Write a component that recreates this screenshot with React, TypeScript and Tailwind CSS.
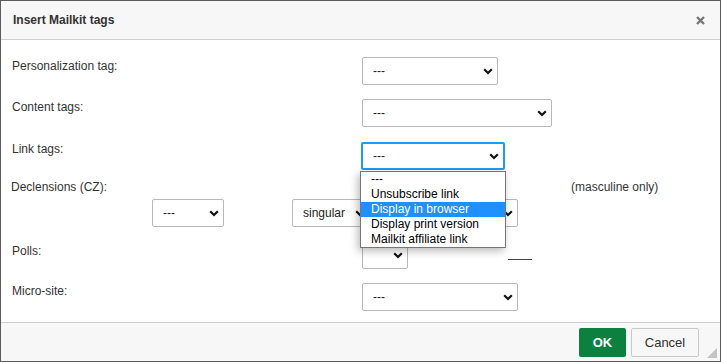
import React from 'react'

function Chevron() {
  return (
    <svg width="10" height="7" viewBox="0 0 10 7" className="shrink-0">
      <path d="M1.2 1.2 L5 5 L8.8 1.2" fill="none" stroke="#111" strokeWidth="2.2" />
    </svg>
  )
}

function Select({ w, value = '', focused = false }: { w: string; value?: string; focused?: boolean }) {
  return (
    <div
      className={`${w} h-[28px] flex items-center justify-between pl-[10px] pr-[4px] bg-white rounded-[2px] ${
        focused ? 'border-2 border-[#1e9bf0] -ml-px' : 'border border-[#b8b8b8]'
      }`}
    >
      <span className="text-[12px] text-[#222] leading-none">{value}</span>
      <Chevron />
    </div>
  )
}

const options = ['---', 'Unsubscribe link', 'Display in browser', 'Display print version', 'Mailkit affiliate link']

export default function App() {
  return (
    <div
      className="relative w-[721px] h-[362px] border border-[#5b5b5b] bg-white flex flex-col text-[#333]"
      style={{ fontFamily: '"Liberation Sans", Arial, sans-serif' }}
    >
      {/* header */}
      <div className="h-[39px] shrink-0 bg-[#f7f7f7] border-b border-[#cfcfcf] flex items-center justify-between pl-3 pr-[15px]">
        <span className="text-[12px] font-bold text-[#333]">Insert Mailkit tags</span>
        <svg width="9" height="9" viewBox="0 0 9 9">
          <path d="M1 1 L8 8 M8 1 L1 8" stroke="#777" strokeWidth="2.4" />
        </svg>
      </div>

      {/* body */}
      <div className="flex-1 pt-[17px] text-[12px] leading-[15px]">
        <div className="flex items-start">
          <div className="w-[361px] pl-[11px] mt-[2px]">Personalization tag:</div>
          <Select w="w-[136px]" value="---" />
        </div>
        <div className="flex items-start mt-[14px]">
          <div className="w-[361px] pl-[11px] mt-px">Content tags:</div>
          <Select w="w-[190px]" value="---" />
        </div>
        <div className="flex items-start mt-[15px]">
          <div className="w-[361px] pl-[11px]">Link tags:</div>
          <Select w="w-[144px]" value="---" focused />
        </div>

        <div className="flex mt-[10px]">
          <div className="w-[570px] pl-[10px]">Declensions (CZ):</div>
          <div>(masculine only)</div>
        </div>
        <div className="flex mt-[4px]">
          <div className="w-[151px]" />
          <Select w="w-[72px]" value="---" />
          <div className="w-[68px]" />
          <Select w="w-[78px]" value="singular" />
          <div className="w-[8px]" />
          <Select w="w-[140px]" value="" />
        </div>

        <div className="flex items-start mt-[14px]">
          <div className="w-[361px] pl-[11px] mt-[3px]">Polls:</div>
          <Select w="w-[46px]" value="" />
          <div className="ml-[100px] mt-[18px] w-[24px] border-b border-[#444]" />
        </div>
        <div className="flex items-start mt-[14px]">
          <div className="w-[361px] pl-[11px] mt-px">Micro-site:</div>
          <Select w="w-[156px]" value="---" />
        </div>
      </div>

      {/* footer */}
      <div className="h-[39px] shrink-0 bg-[#f7f7f7] border-t border-[#cfcfcf] flex items-start justify-end gap-[5px] pt-[5px] pr-[21px] relative">
        <button className="w-[47px] h-[29px] rounded-[2px] bg-[#0b803f] text-white text-[13px] font-bold">OK</button>
        <button className="w-[68px] h-[29px] rounded-[2px] bg-[#f7f7f7] border border-[#c8c8c8] text-[#333] text-[13px]">
          Cancel
        </button>
        <svg width="10" height="10" viewBox="0 0 10 10" className="absolute right-[3px] bottom-[3px]">
          <path d="M10 0 L10 10 L0 10 Z" fill="#c4c4c4" />
        </svg>
      </div>

      {/* open dropdown list */}
      <div className="absolute left-[359px] top-[170px] w-[146px] bg-white border border-[#767676] shadow-[-2px_3px_8px_rgba(0,0,0,0.28)] text-[12px] leading-[15px] text-black">
        {options.map((o) => (
          <div key={o} className={`h-[15px] pl-[10px] ${o === 'Display in browser' ? 'bg-[#1e90ff] text-white' : ''}`}>
            {o}
          </div>
        ))}
      </div>
    </div>
  )
}
